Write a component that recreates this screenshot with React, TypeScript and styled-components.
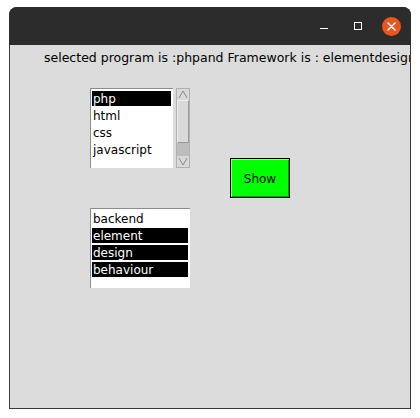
import React from "react";
import styled, { createGlobalStyle } from "styled-components";

const GlobalStyle = createGlobalStyle`
  html, body { margin: 0; padding: 0; background: #ffffff; }
  body { font-family: "DejaVu Sans", "Liberation Sans", sans-serif; }
`;

const Screen = styled.div`
  padding: 7px 0 0 9px;
`;

const Window = styled.div`
  width: 402px;
  height: 402px;
  border-radius: 8px 8px 0 0;
  overflow: hidden;
  display: flex;
  flex-direction: column;
  background: #2c2c2c;
`;

const TitleBar = styled.div`
  height: 38px;
  flex: 0 0 38px;
  background: #2c2c2c;
  display: flex;
  align-items: center;
  justify-content: flex-end;
  padding-right: 10px;
`;

const MinButton = styled.div`
  width: 8px;
  height: 1.5px;
  background: #ffffff;
  margin-top: 5px;
  margin-right: 26px;
`;

const MaxButton = styled.div`
  width: 6px;
  height: 6px;
  border: 1.2px solid #ffffff;
  margin-right: 20px;
`;

const CloseButton = styled.div`
  width: 19px;
  height: 19px;
  border-radius: 50%;
  background: #e95420;
  display: flex;
  align-items: center;
  justify-content: center;
`;

const Content = styled.div`
  flex: 1;
  background: #dcdcdc;
  border: 1px solid #3a3a3a;
  border-top: none;
  overflow: hidden;
  display: flex;
  flex-direction: column;
`;

const Label = styled.div`
  margin: 5px 0 0 34px;
  font-size: 12.5px;
  line-height: 16px;
  white-space: nowrap;
  color: #000000;
`;

const Main = styled.div`
  display: flex;
  margin: 22px 0 0 80px;
`;

const LeftColumn = styled.div`
  display: flex;
  flex-direction: column;
  gap: 40px;
`;

const ListRow = styled.div`
  display: flex;
  gap: 3px;
`;

const ListBox = styled.div<{ $width: number }>`
  width: ${(p) => p.$width}px;
  height: 80px;
  box-sizing: border-box;
  background: #ffffff;
  border-top: 1px solid #8c8c8c;
  border-left: 1px solid #8c8c8c;
  padding: 2px 2px 0 1px;
  overflow: hidden;
`;

const Item = styled.div<{ $selected?: boolean }>`
  height: 15px;
  box-sizing: border-box;
  padding: 2px 0 0 1px;
  line-height: 13px;
  margin-bottom: 2px;
  font-size: 12px;
  white-space: nowrap;
  background: ${(p) => (p.$selected ? "#000000" : "transparent")};
  color: ${(p) => (p.$selected ? "#ffffff" : "#000000")};
`;

const ScrollBar = styled.div`
  width: 14px;
  height: 80px;
  box-sizing: border-box;
  display: flex;
  flex-direction: column;
  background: #c3c3c3;
  border: 1px solid #b0b0b0;
`;

const Arrow = styled.div`
  height: 11px;
  flex: 0 0 11px;
  background: #d9d9d9;
  display: flex;
  align-items: center;
  justify-content: center;
`;

const Thumb = styled.div`
  height: 43px;
  box-sizing: border-box;
  background: #d9d9d9;
  border: 1px solid #9a9a9a;
  border-top-color: #eeeeee;
  border-left-color: #eeeeee;
`;

const Trough = styled.div`
  flex: 1;
  background: #bdbdbd;
`;

const ShowButton = styled.button`
  margin: 70px 0 0 40px;
  width: 60px;
  height: 40px;
  box-sizing: border-box;
  background: #00ff00;
  border: 1px solid #000000;
  box-shadow: inset 1px 1px 0 #ffffff88, inset -1px -1px 0 #00a000, inset 2px 2px 0 #00ff00;
  padding: 2px 0 0 0;
  font-family: "DejaVu Sans", "Liberation Sans", sans-serif;
  font-size: 12px;
  color: #000000;
  display: flex;
  align-items: center;
  justify-content: center;
`;

const programs = [
  { name: "php", selected: true },
  { name: "html" },
  { name: "css" },
  { name: "javascript" },
];

const frameworks = [
  { name: "backend" },
  { name: "element", selected: true },
  { name: "design", selected: true },
  { name: "behaviour", selected: true },
];

export default function App() {
  return (
    <>
      <GlobalStyle />
      <Screen>
        <Window>
          <TitleBar>
            <MinButton />
            <MaxButton />
            <CloseButton>
              <svg width="9" height="9" viewBox="0 0 9 9">
                <path d="M1 1 L8 8 M8 1 L1 8" stroke="#ffffff" strokeWidth="1.5" strokeLinecap="round" />
              </svg>
            </CloseButton>
          </TitleBar>
          <Content>
            <Label>selected program is :phpand Framework is : elementdesignbehaviour</Label>
            <Main>
              <LeftColumn>
                <ListRow>
                  <ListBox $width={83}>
                    {programs.map((p) => (
                      <Item key={p.name} $selected={p.selected}>
                        {p.name}
                      </Item>
                    ))}
                  </ListBox>
                  <ScrollBar>
                    <Arrow>
                      <svg width="10" height="9" viewBox="0 0 10 9">
                        <path d="M1 8 L5 1 L9 8" fill="none" stroke="#8a8a8a" strokeWidth="1" />
                      </svg>
                    </Arrow>
                    <Thumb />
                    <Trough />
                    <Arrow>
                      <svg width="10" height="9" viewBox="0 0 10 9">
                        <path d="M1 1 L5 8 L9 1" fill="none" stroke="#8a8a8a" strokeWidth="1" />
                      </svg>
                    </Arrow>
                  </ScrollBar>
                </ListRow>
                <ListBox $width={100}>
                  {frameworks.map((f) => (
                    <Item key={f.name} $selected={f.selected}>
                      {f.name}
                    </Item>
                  ))}
                </ListBox>
              </LeftColumn>
              <ShowButton>Show</ShowButton>
            </Main>
          </Content>
        </Window>
      </Screen>
    </>
  );
}
